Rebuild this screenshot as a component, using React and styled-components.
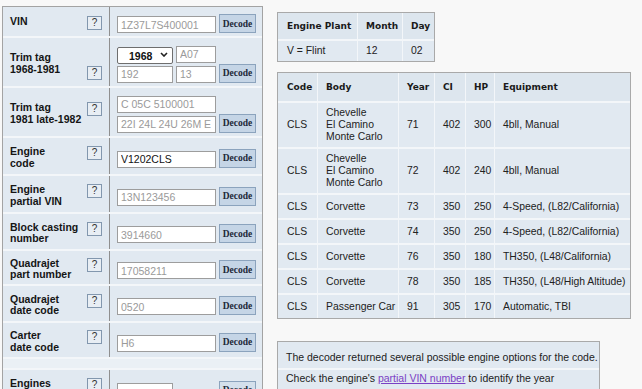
import React from 'react';
import styled, { createGlobalStyle } from 'styled-components';

const GlobalStyle = createGlobalStyle`
  html, body { margin: 0; padding: 0; background: #f8f8f8; }
  body { font-family: "Liberation Sans", Arial, sans-serif; color: #1a1a1a; }
`;

const Page = styled.div`
  display: flex;
  align-items: flex-start;
  gap: 14px;
  padding: 6px 0 0 2px;
  height: 383px;
  overflow: hidden;
`;

/* ---------- left: decoder form ---------- */

const Form = styled.div`
  flex-shrink: 0;
  width: 259px;
  border: 1px solid #a3a3a3;
  background: #f3f6f9;
  display: flex;
  flex-direction: column;
  gap: 2px;
`;

const Row = styled.div`
  display: grid;
  grid-template-columns: 107px 1fr;
  height: ${p => p.$h}px;
  flex-shrink: 0;
  background: #e1e9f1;
`;

const Spacer = styled.div`
  height: 9px;
  flex-shrink: 0;
  background: #eaf0f5;
`;

const LabelCell = styled.div`
  border-right: 1px solid #8f8f8f;
  padding: 3px 7px 0 7px;
  display: grid;
  grid-template-columns: 1fr auto;
  align-content: center;
  column-gap: 4px;
`;

const Label = styled.div`
  font-weight: bold;
  font-size: 10.5px;
  line-height: 11.5px;
  color: #151515;
  white-space: nowrap;
`;

const Help = styled.button`
  align-self: ${p => (p.$bottom ? 'end' : 'start')};
  margin-bottom: ${p => (p.$bottom ? '-5px' : '0')};
  width: 15px;
  height: 14px;
  padding: 0;
  border: 1px solid #8297ae;
  background: #e8eef4;
  font: 10px "Liberation Sans", Arial, sans-serif;
  color: #333;
  line-height: 12px;
`;

const ValueCell = styled.div`
  display: flex;
  align-items: center;
  padding: 4px 6px 0 7px;
`;

const Controls = styled.div`
  display: flex;
  align-items: flex-end;
  gap: 3px;
`;

const Stack = styled.div`
  display: flex;
  flex-direction: column;
  gap: 3px;
`;

const Line = styled.div`
  display: flex;
  gap: 3px;
`;

const Field = styled.input`
  box-sizing: border-box;
  width: ${p => p.$w}px;
  height: 17px;
  border: 1px solid #9d9d9d;
  background: #fff;
  padding: 0 3px;
  font: 10.5px "Liberation Sans", Arial, sans-serif;
  color: #111;
  outline: none;
  visibility: ${p => (p.$ghost ? 'hidden' : 'visible')};
  &::placeholder { color: #9a9a9a; }
`;

const SelectBox = styled.div`
  position: relative;
  width: 56px;
  height: 17px;
  select {
    box-sizing: border-box;
    appearance: none;
    width: 100%;
    height: 100%;
    border: 1px solid #6e6e6e;
    border-radius: 2px;
    background: #fff;
    padding: 0 0 0 11px;
    font: bold 10.5px "Liberation Sans", Arial, sans-serif;
    color: #111;
  }
  svg {
    position: absolute;
    right: 5px;
    top: 6px;
    pointer-events: none;
  }
`;

const Decode = styled.button`
  box-sizing: border-box;
  width: 37px;
  height: 19px;
  padding: 0;
  border: 1px solid #8ba3bd;
  background: ${p => (p.$muted ? '#d4e0ec' : '#c5d5e6')};
  font: bold 9.5px "Liberation Serif", "Times New Roman", serif;
  color: #1d2838;
`;

const FormRow = ({ h, label, bottomHelp, children }) => (
  <Row $h={h}>
    <LabelCell>
      <Label>{label}</Label>
      <Help $bottom={bottomHelp}>?</Help>
    </LabelCell>
    <ValueCell>
      <Controls>
        {children}
        <Decode>Decode</Decode>
      </Controls>
    </ValueCell>
  </Row>
);

/* ---------- right: results ---------- */

const Results = styled.div`
  display: flex;
  flex-direction: column;
  align-items: flex-start;
  padding-top: 6px;
`;

const Table = styled.table`
  table-layout: fixed;
  width: ${p => p.$w}px;
  border-collapse: separate;
  border-spacing: 0;
  border: 1px solid #a9a9a9;
  background: #e1e9f1;
  margin-bottom: ${p => p.$gap}px;
  font-size: 10.4px;
  color: #222;

  th, td {
    text-align: left;
    vertical-align: middle;
    white-space: nowrap;
    padding: 0 0 0 8px;
    border-left: 1px solid #f3f6f9;
    border-top: 2px solid #f3f6f9;
    overflow: visible;
  }
  th:first-child, td:first-child { border-left: none; padding-left: 9px; }
  thead tr:first-child th { border-top: none; }
  th {
    font: bold 9px "DejaVu Sans", Verdana, sans-serif;
    color: #1a1a1a;
    height: ${p => p.$headH}px;
    background: #dde6ee;
  }
  td {
    line-height: 12px;
    padding-top: 4px;
    padding-bottom: 4px;
    height: ${p => p.$rowH}px;
    box-sizing: border-box;
  }
`;

const Note = styled.div`
  width: 321px;
  border: 1px solid #a9a9a9;
  background: #e1e9f1;
  font-size: 10.5px;
  color: #222;
`;

const NoteLine = styled.div`
  box-sizing: border-box;
  height: 26px;
  display: flex;
  align-items: center;
  padding: 3px 8px 0;
  white-space: nowrap;
  & + & {
    border-top: 2px solid #f3f6f9;
    height: 22px;
    padding: 0 8px 4px;
  }
  a { color: #7a40c4; }
`;

const engines = [
  ['CLS', 'Chevelle\nEl Camino\nMonte Carlo', '71', '402', '300', '4bll, Manual'],
  ['CLS', 'Chevelle\nEl Camino\nMonte Carlo', '72', '402', '240', '4bll, Manual'],
  ['CLS', 'Corvette', '73', '350', '250', '4-Speed, (L82/California)'],
  ['CLS', 'Corvette', '74', '350', '250', '4-Speed, (L82/California)'],
  ['CLS', 'Corvette', '76', '350', '180', 'TH350, (L48/California)'],
  ['CLS', 'Corvette', '78', '350', '185', 'TH350, (L48/High Altitude)'],
  ['CLS', 'Passenger Car', '91', '305', '170', 'Automatic, TBI'],
];

const Chevron = () => (
  <svg width="8" height="5" viewBox="0 0 8 5">
    <path d="M1 1 L4 4 L7 1" fill="none" stroke="#222" strokeWidth="1.6" />
  </svg>
);

export default function App() {
  return (
    <>
      <GlobalStyle />
      <Page>
        <Form>
          <FormRow h={29} label="VIN">
            <Field $w={99} placeholder="1Z37L7S400001" />
          </FormRow>
          <FormRow h={48} label={<>Trim tag<br />1968-1981</>} bottomHelp>
            <Stack>
              <Line>
                <SelectBox>
                  <select defaultValue="1968">
                    <option>1968</option>
                    <option>1969</option>
                  </select>
                  <Chevron />
                </SelectBox>
                <Field $w={40} placeholder="A07" />
              </Line>
              <Line>
                <Field $w={56} placeholder="192" />
                <Field $w={40} placeholder="13" />
              </Line>
            </Stack>
          </FormRow>
          <FormRow h={48} label={<>Trim tag<br />1981 late-1982</>}>
            <Stack>
              <Field $w={99} placeholder="C 05C 5100001" />
              <Field $w={99} placeholder="22I 24L 24U 26M E" />
            </Stack>
          </FormRow>
          <FormRow h={36} label={<>Engine<br />code</>}>
            <Field $w={99} defaultValue="V1202CLS" />
          </FormRow>
          <FormRow h={36} label={<>Engine<br />partial VIN</>}>
            <Field $w={99} placeholder="13N123456" />
          </FormRow>
          <FormRow h={35} label={<>Block casting<br />number</>}>
            <Field $w={99} placeholder="3914660" />
          </FormRow>
          <FormRow h={33} label={<>Quadrajet<br />part number</>}>
            <Field $w={99} placeholder="17058211" />
          </FormRow>
          <FormRow h={35} label={<>Quadrajet<br />date code</>}>
            <Field $w={99} placeholder="0520" />
          </FormRow>
          <FormRow h={34} label={<>Carter<br />date code</>}>
            <Field $w={99} placeholder="H6" />
          </FormRow>
          <Spacer />
          <Row $h={36}>
            <LabelCell>
              <Label>Engines<br />serial</Label>
              <Help>?</Help>
            </LabelCell>
            <ValueCell>
              <Controls>
                <Field $w={56} />
                <Field $w={40} $ghost />
                <Decode $muted>Decode</Decode>
              </Controls>
            </ValueCell>
          </Row>
        </Form>

        <Results>
          <Table $w={158} $gap={10} $headH={26} $rowH={22}>
            <colgroup>
              <col style={{ width: 79 }} />
              <col style={{ width: 45 }} />
              <col style={{ width: 32 }} />
            </colgroup>
            <thead>
              <tr><th>Engine Plant</th><th>Month</th><th>Day</th></tr>
            </thead>
            <tbody>
              <tr><td>V = Flint</td><td>12</td><td>02</td></tr>
            </tbody>
          </Table>

          <Table $w={354} $gap={22} $headH={28} $rowH={25}>
            <colgroup>
              <col style={{ width: 39 }} />
              <col style={{ width: 81 }} />
              <col style={{ width: 36 }} />
              <col style={{ width: 31 }} />
              <col style={{ width: 29 }} />
              <col style={{ width: 136 }} />
            </colgroup>
            <thead>
              <tr>
                <th>Code</th><th>Body</th><th>Year</th><th>CI</th><th>HP</th><th>Equipment</th>
              </tr>
            </thead>
            <tbody>
              {engines.map((r, i) => (
                <tr key={i}>
                  <td>{r[0]}</td>
                  <td>{r[1].split('\n').map((l, j) => <div key={j}>{l}</div>)}</td>
                  <td>{r[2]}</td>
                  <td>{r[3]}</td>
                  <td>{r[4]}</td>
                  <td>{r[5]}</td>
                </tr>
              ))}
            </tbody>
          </Table>

          <Note>
            <NoteLine>The decoder returned several possible engine options for the code.</NoteLine>
            <NoteLine>Check the engine's&nbsp;<a href="#partial">partial VIN number</a>&nbsp;to identify the year</NoteLine>
          </Note>
        </Results>
      </Page>
    </>
  );
}
